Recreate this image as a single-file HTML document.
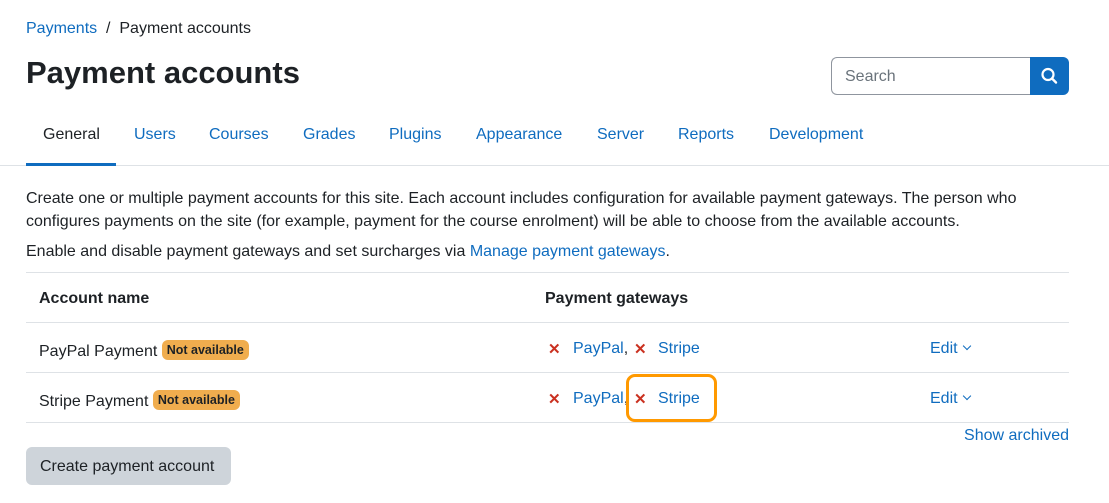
<!DOCTYPE html>
<html><head><style>
*{margin:0;padding:0;box-sizing:border-box}
body{width:1109px;height:503px;background:#fff;font-family:"Liberation Sans",sans-serif;color:#1d2125;font-size:16px;position:relative;overflow:hidden}
.a{position:absolute;white-space:nowrap}
.l{color:#0f6cbf;text-decoration:none}
.hr{position:absolute;height:1px;background:#dee2e6}
.badge{display:inline-block;background:#f0ad4e;color:#1d2125;font-weight:bold;font-size:12.5px;padding:3px 5px;border-radius:6px;vertical-align:2px}
.x{color:#ca3120;font-weight:bold;font-size:15px}
.chev{display:inline-block;width:6px;height:6px;border-right:1.5px solid #0f6cbf;border-bottom:1.5px solid #0f6cbf;transform:rotate(45deg);margin-left:6px;vertical-align:4px}
</style></head><body>
<div class="a" style="left:26px;top:20px"><span class="l">Payments</span> &nbsp;/&nbsp; Payment accounts</div>
<div class="a" style="left:26px;top:55px;font-size:31px;font-weight:bold">Payment accounts</div>
<div class="a" style="left:831px;top:57px;width:200px;height:38px;border:1px solid #8f959e;border-right:none;border-radius:6px 0 0 6px;color:#6a737b;padding:10px 13px">Search</div>
<div class="a" style="left:1030px;top:57px;width:39px;height:38px;background:#0f6cbf;border-radius:0 6px 6px 0">
<svg width="39" height="38" viewBox="0 0 39 38"><circle cx="18" cy="17.5" r="5.5" fill="none" stroke="#fff" stroke-width="2.2"/><line x1="22" y1="21.5" x2="26" y2="25.5" stroke="#fff" stroke-width="2.4" stroke-linecap="round"/></svg></div>
<div class="a" style="left:43px;top:126px">General</div>
<div class="a l" style="left:134px;top:126px">Users</div>
<div class="a l" style="left:209px;top:126px">Courses</div>
<div class="a l" style="left:303px;top:126px">Grades</div>
<div class="a l" style="left:389px;top:126px">Plugins</div>
<div class="a l" style="left:476px;top:126px">Appearance</div>
<div class="a l" style="left:597px;top:126px">Server</div>
<div class="a l" style="left:678px;top:126px">Reports</div>
<div class="a l" style="left:769px;top:126px">Development</div>
<div class="hr" style="left:0;top:165px;width:1109px"></div>
<div class="a" style="left:26px;top:163px;width:90px;height:3px;background:#0f6cbf"></div>
<div class="a" style="left:26px;top:187px;line-height:23px">Create one or multiple payment accounts for this site. Each account includes configuration for available payment gateways. The person who<br>configures payments on the site (for example, payment for the course enrolment) will be able to choose from the available accounts.</div>
<div class="a" style="left:26px;top:243px">Enable and disable payment gateways and set surcharges via <span class="l">Manage payment gateways</span>.</div>
<div class="hr" style="left:26px;top:272px;width:1043px"></div>
<div class="a" style="left:39px;top:290px;font-weight:bold">Account name</div>
<div class="a" style="left:545px;top:290px;font-weight:bold">Payment gateways</div>
<div class="hr" style="left:26px;top:322px;width:1043px"></div>
<div class="a" style="left:39px;top:340px">PayPal Payment <span class="badge">Not available</span></div>
<div class="a x" style="left:548px;top:340px">✕</div><div class="a" style="left:573px;top:340px"><span class="l">PayPal</span>,</div>
<div class="a x" style="left:634px;top:340px">✕</div><div class="a l" style="left:658px;top:340px">Stripe</div>
<div class="a l" style="left:930px;top:340px">Edit<span class="chev"></span></div>
<div class="hr" style="left:26px;top:372px;width:1043px"></div>
<div class="a" style="left:39px;top:390px">Stripe Payment <span class="badge">Not available</span></div>
<div class="a x" style="left:548px;top:390px">✕</div><div class="a" style="left:573px;top:390px"><span class="l">PayPal</span>,</div>
<div class="a x" style="left:634px;top:390px">✕</div><div class="a l" style="left:658px;top:390px">Stripe</div>
<div class="a" style="left:626px;top:374px;width:91px;height:48px;border:3px solid #f90;border-radius:9px"></div>
<div class="a l" style="left:930px;top:390px">Edit<span class="chev"></span></div>
<div class="hr" style="left:26px;top:422px;width:1043px"></div>
<div class="a l" style="right:40px;top:427px">Show archived</div>
<div class="a" style="left:26px;top:447px;width:205px;height:38px;background:#ced4da;border-radius:6px;padding:11px 14px">Create payment account</div>
</body></html>
